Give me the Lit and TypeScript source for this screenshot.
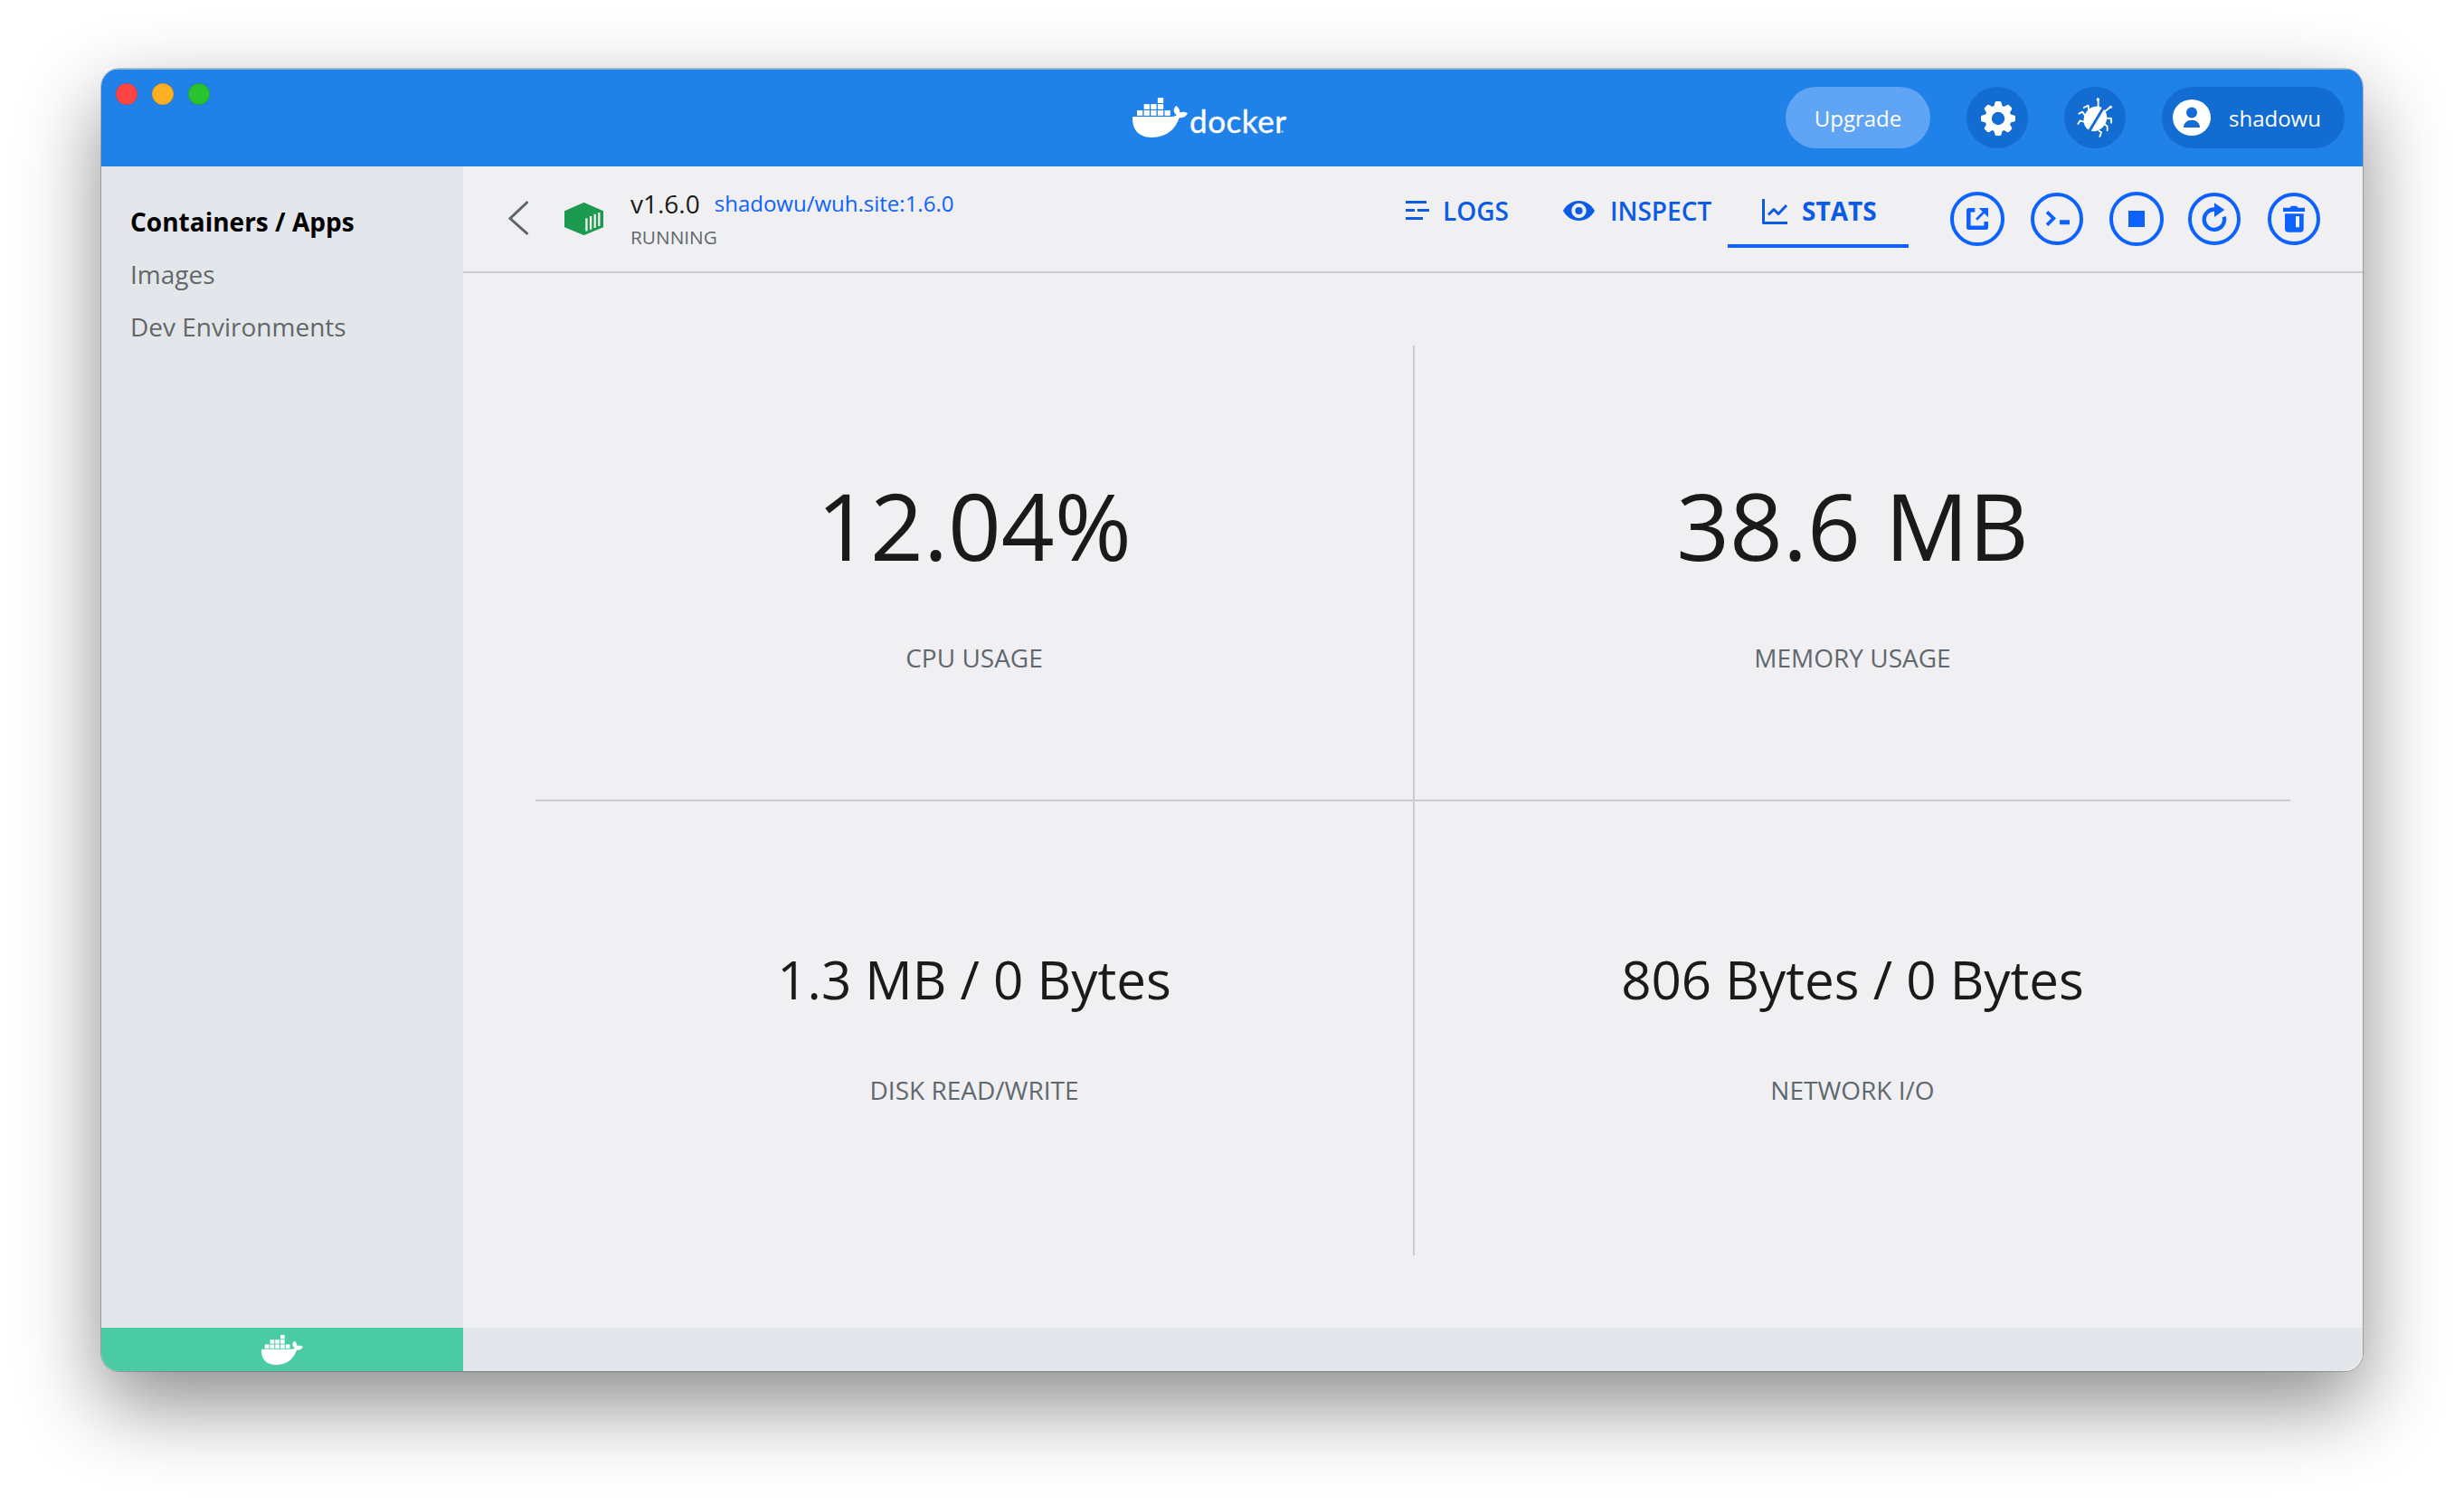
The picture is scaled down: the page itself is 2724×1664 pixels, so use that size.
import { LitElement, html, css, svg } from 'lit';
import { customElement, property, state } from 'lit/decorators.js';
import { classMap } from 'lit/directives/class-map.js';

@customElement('docker-whale')
export class DockerWhale extends LitElement {
  static styles = css`
    :host {
      display: block;
      line-height: 0;
    }

    svg {
      width: 100%;
      height: 100%;
      fill: white;
    }
  `;

  render() {
    const boxes = [
      [84, 0],
      [38, 21], [61, 21], [84, 21],
      [15, 42], [38, 42], [61, 42], [84, 42], [107, 42],
    ];

    return html`
      <svg viewBox="0 0 184 132">
        ${boxes.map(([x, y]) => svg`<rect x=${x} y=${y} width="19" height="17.5" />`)}
        <path d="M3 63H130C138 63 144 61 147 58C136 50 134 37 146 27C154 32 158 40 158 49C166 46 177 47 184 52C180 62 169 68 156 67C142 107 113 132 65 132C24 132 0 110 0 68Q0 63 3 63Z" />
      </svg>
    `;
  }
}

@customElement('title-bar')
export class TitleBar extends LitElement {
  static styles = css`
    :host {
      display: grid;
      grid-template-columns: 1fr auto 1fr;
      height: 108px;
      background: #2081e8;
      color: white;
      box-shadow: inset 0 2px 0 -1px rgba(255, 255, 255, 0.45);
    }

    .lights {
      display: flex;
      gap: 16px;
      padding: 16px;
    }

    .light {
      width: 24px;
      height: 24px;
      border-radius: 50%;
      box-sizing: border-box;
      border: 1px solid rgba(0, 0, 0, 0.12);
    }

    .close {
      background: #ff4645;
    }

    .minimize {
      background: #ffb024;
    }

    .zoom {
      background: #29c32f;
    }

    .logo {
      display: flex;
      align-items: flex-start;
      padding-top: 32px;
      margin-right: 48px;
    }

    .logo docker-whale {
      width: 61px;
      height: 44px;
    }

    .wordmark {
      width: 112px;
      height: 54px;
      overflow: visible;
      font-family: Lato, 'Open Sans', sans-serif;
      font-size: 35px;
      font-weight: 400;
      fill: white;
    }

    .actions {
      display: flex;
      justify-content: flex-end;
      align-items: center;
      gap: 40px;
      padding-right: 20px;
      font-size: 24px;
    }

    .pill {
      display: flex;
      align-items: center;
      box-sizing: border-box;
      height: 68px;
      border-radius: 34px;
      background: #126cd1;
    }

    .upgrade {
      width: 160px;
      justify-content: center;
      background: #5fa4f5;
    }

    .round {
      width: 68px;
      justify-content: center;
    }

    .user {
      width: 202px;
      gap: 20px;
      padding-left: 12px;
    }

    .avatar {
      width: 42px;
      height: 40px;
    }

    .gear {
      width: 38px;
      height: 38px;
      margin: 2px 0 0 2px;
    }

    .bug {
      width: 40px;
      height: 44px;
    }
  `;

  renderGear() {
    return html`
      <svg class="gear" viewBox="-19 -19 38 38" fill="white">
        <circle r="10.9" fill="none" stroke="white" stroke-width="7.4" />
        ${[0, 45, 90, 135, 180, 225, 270, 315].map(
          (a) => svg`<path transform="rotate(${a})" d="M-5 -12L-3.6 -17.5Q-3.3 -19 -2 -19H2Q3.3 -19 3.6 -17.5L5 -12Z" />`
        )}
      </svg>
    `;
  }

  renderBug() {
    return html`
      <svg class="bug" viewBox="0 0 120 132" fill="white">
        <ellipse cx="61" cy="70" rx="37" ry="43" transform="rotate(30 61 70)" />
        <g fill="none" stroke="white" stroke-width="5.5" stroke-linecap="round" stroke-linejoin="round">
          <path d="M71 32L71 8M90 48L112 31" />
          <path d="M39 40L38 26L23 33M27 59L19 47L7 53M26 81L11 76L4 87" />
          <path d="M96 68L114 69V83M92 88L101 95V109M74 110L81 115L76 129" />
        </g>
        <circle cx="70" cy="6" r="5" />
        <circle cx="112" cy="31" r="5" />
        <path d="M38 116L88 34" stroke="#126cd1" stroke-width="9" />
      </svg>
    `;
  }

  render() {
    return html`
      <div class="lights">
        <span class="light close"></span>
        <span class="light minimize"></span>
        <span class="light zoom"></span>
      </div>
      <div class="logo">
        <docker-whale></docker-whale>
        <svg class="wordmark">
          <text x="2" y="39" textLength="107" stroke="white" stroke-width="0.4">docker</text>
          <circle cx="104.5" cy="37.5" r="1.2" opacity="0.6" />
        </svg>
      </div>
      <div class="actions">
        <div class="pill upgrade">Upgrade</div>
        <div class="pill round">${this.renderGear()}</div>
        <div class="pill round">${this.renderBug()}</div>
        <div class="pill user">
          <svg class="avatar" viewBox="0 0 42 40" fill="#126cd1">
            <ellipse cx="21" cy="20" rx="21" ry="20" fill="white" />
            <circle cx="21" cy="14.5" r="6" />
            <path d="M12 31C12 26 16 22.7 21 22.7S30 26 30 31Z" />
          </svg>
          shadowu
        </div>
      </div>
    `;
  }
}

@customElement('side-bar')
export class SideBar extends LitElement {
  static styles = css`
    :host {
      display: flex;
      flex-direction: column;
      justify-content: space-between;
      background: #e3e6eb;
    }

    .nav {
      padding: 32px;
      font-size: 28px;
      line-height: 58px;
      color: #666;
    }

    .active {
      font-weight: 700;
      color: #000;
    }

    .status {
      display: flex;
      justify-content: center;
      align-items: center;
      height: 48px;
      background: #4acba4;
    }

    .status docker-whale {
      width: 46px;
      height: 33px;
    }
  `;

  @property({ type: String }) active = 'Containers / Apps';

  render() {
    const items = ['Containers / Apps', 'Images', 'Dev Environments'];

    return html`
      <div class="nav">
        ${items.map(
          (item) => html`<div class=${classMap({ active: item === this.active })}>${item}</div>`
        )}
      </div>
      <div class="status"><docker-whale></docker-whale></div>
    `;
  }
}

@customElement('container-header')
export class ContainerHeader extends LitElement {
  static styles = css`
    :host {
      display: flex;
      align-items: flex-start;
      box-sizing: border-box;
      height: 118px;
      padding: 0 47px 0 49px;
      border-bottom: 2px solid #cbcbce;
    }

    .back {
      width: 24px;
      height: 40px;
      margin-top: 37px;
    }

    .cube {
      width: 43px;
      height: 36px;
      margin: 40px 0 0 39px;
    }

    .info {
      margin: 22px 0 0 30px;
    }

    .name-row {
      display: flex;
      align-items: flex-start;
      gap: 16px;
      height: 38px;
      line-height: 38px;
    }

    .name {
      font-size: 28px;
      color: #1a1a1a;
    }

    .image {
      font-size: 24px;
      color: #0d61ff;
    }

    .state {
      font-size: 20.8px;
      line-height: 36px;
      color: #5f686d;
    }

    .tabs {
      display: flex;
      margin-left: auto;
      padding-top: 8px;
      font-size: 28px;
      font-weight: 600;
      color: #0b5be6;
    }

    .tab {
      display: flex;
      align-items: center;
      box-sizing: border-box;
      height: 82px;
      padding-top: 4px;
      border-bottom: 4px solid transparent;
    }

    .tab.selected {
      width: 200px;
      padding-left: 38px;
      font-weight: 700;
      border-bottom-color: #0d61ff;
    }

    .tab svg {
      margin-right: 16px;
    }

    .logs {
      width: 174px;
    }

    .logs svg {
      margin-right: 15px;
    }

    .inspect {
      width: 182px;
    }

    .inspect svg {
      margin-right: 17px;
    }

    .actions {
      display: flex;
      align-items: center;
      gap: 29px;
      margin: 28px 0 0 46px;
    }

    .action {
      display: flex;
      justify-content: center;
      align-items: center;
      box-sizing: border-box;
      width: 58px;
      height: 58px;
      border: 4px solid #0d61ff;
      border-radius: 50%;
    }

    .large {
      width: 60px;
      height: 60px;
    }

    .restart {
      margin-left: -2px;
    }

    .remove {
      margin-left: 1px;
    }

    .action svg {
      flex: none;
      width: 36px;
      height: 36px;
      fill: #0d61ff;
    }

    .action .line {
      fill: none;
      stroke: #0d61ff;
    }
  `;

  @state() private tab = 'stats';

  renderTab(id: string, label: string, icon: unknown) {
    return html`
      <div class="tab ${id} ${this.tab === id ? 'selected' : ''}" @click=${() => (this.tab = id)}>
        ${icon}${label}
      </div>
    `;
  }

  render() {
    return html`
      <svg class="back" viewBox="0 0 24 40" fill="none" stroke="#5c656a" stroke-width="3">
        <path d="M22.5 2L3 20.5L22.5 38" />
      </svg>
      <svg class="cube" viewBox="0 0 43 36">
        <path
          d="M21.5 1L42 10V26.5L21.5 35L1 26.5V10Z"
          fill="#1b9a50"
          stroke="#1b9a50"
          stroke-width="2"
          stroke-linejoin="round"
        />
        <path
          d="M24.4 17.2V31.6M29.1 15V29.8M33.7 12.8V28M38.3 11V26"
          stroke="#f0f0f3"
          stroke-width="2.3"
        />
      </svg>
      <div class="info">
        <div class="name-row">
          <span class="name">v1.6.0</span>
          <span class="image">shadowu/wuh.site:1.6.0</span>
        </div>
        <div class="state">RUNNING</div>
      </div>
      <div class="tabs">
        ${this.renderTab('logs', 'LOGS', html`
          <svg width="26" height="22" fill="#0b5be6">
            <path d="M0 0H23V3H0ZM0 9H10V12H0ZM13 9H26V12H13ZM0 18H19V21H0Z" />
          </svg>
        `)}
        ${this.renderTab('inspect', 'INSPECT', html`
          <svg width="35" height="22" viewBox="0 0 35 22" fill="#0b5be6">
            <path
              fill-rule="evenodd"
              d="M0 11C4 4 10 0 17.5 0S31 4 35 11C31 18 25 22 17.5 22S4 18 0 11ZM17.5 2.8A8.2 8.2 0 1 0 17.5 19.2A8.2 8.2 0 1 0 17.5 2.8Z"
            />
            <circle cx="17.5" cy="11" r="4.1" />
          </svg>
        `)}
        ${this.renderTab('stats', 'STATS', html`
          <svg width="28" height="30" fill="none" stroke="#0b5be6" stroke-width="3" stroke-linejoin="round">
            <path d="M1.5 2V28.5H28" />
            <path d="M7 19.5L13 13.5L18 18.5L27 9" />
          </svg>
        `)}
      </div>
      <div class="actions">
        <div class="action large">
          <svg viewBox="0 0 36 36">
            <path class="line" stroke-width="4.6" stroke-linejoin="round" d="M15.3 8.3H8.3V27.7H27.7V21" />
            <path class="line" stroke-width="2.7" d="M17 18.7L26 9.7" />
            <path d="M19.7 6H30V16.3Z" />
          </svg>
        </div>
        <div class="action">
          <svg viewBox="0 0 36 36">
            <path class="line" stroke-width="3.8" d="M7 10.3L14.3 17.5L7 24.7" />
            <path d="M21 19.3H32V24.3H21Z" />
          </svg>
        </div>
        <div class="action large">
          <svg viewBox="0 0 36 36"><path d="M9 9H27V27H9Z" /></svg>
        </div>
        <div class="action restart">
          <svg viewBox="0 0 36 36">
            <path class="line" stroke-width="4.3" d="M18 7.5A11.2 11.2 0 1 0 28.7 15.7" />
            <path d="M18 0.3L29.3 8L18 16Z" />
          </svg>
        </div>
        <div class="action remove">
          <svg viewBox="0 0 36 36">
            <path d="M6 5.7H13.4L15 3.7H21L22.6 5.7H30V10H6Z" />
            <path
              fill-rule="evenodd"
              d="M8 12.3H28.7V29Q28.7 32.7 25 32.7H11.7Q8 32.7 8 29ZM20 15V27.3H24V15Z"
            />
          </svg>
        </div>
      </div>
    `;
  }
}

@customElement('container-stats')
export class ContainerStats extends LitElement {
  static styles = css`
    :host {
      display: grid;
      grid-template-columns: 970px 968px;
      grid-template-rows: 502px 502px;
      gap: 2px;
      padding: 80px;
    }

    .cell {
      display: flex;
      flex-direction: column;
      align-items: center;
      position: relative;
      color: #1a1a1a;
    }

    .value {
      font-size: 103px;
      line-height: 142px;
      margin: 127px 0 57px;
    }

    .small .value {
      font-size: 58.3px;
      line-height: 82px;
      margin: 156px 0 62px;
    }

    .label {
      font-size: 28px;
      line-height: 38px;
      color: #5f686d;
    }

    .left::after {
      content: '';
      position: absolute;
      top: 0;
      bottom: 0;
      right: -2px;
      width: 2px;
      background: #cbcbce;
    }

    .top::before {
      content: '';
      position: absolute;
      left: 0;
      right: 0;
      bottom: -2px;
      height: 2px;
      background: #cbcbce;
    }

    .top.left::before {
      right: -2px;
    }
  `;

  render() {
    return html`
      <div class="cell top left">
        <div class="value">12.04%</div>
        <div class="label">CPU USAGE</div>
      </div>
      <div class="cell top">
        <div class="value">38.6 MB</div>
        <div class="label">MEMORY USAGE</div>
      </div>
      <div class="cell small left">
        <div class="value">1.3 MB / 0 Bytes</div>
        <div class="label">DISK READ/WRITE</div>
      </div>
      <div class="cell small">
        <div class="value">806 Bytes / 0 Bytes</div>
        <div class="label">NETWORK I/O</div>
      </div>
    `;
  }
}

@customElement('app-root')
export class AppRoot extends LitElement {
  static styles = css`
    :host {
      display: block;
      box-sizing: border-box;
      width: 2724px;
      height: 1664px;
      padding: 76px 112px;
      overflow: hidden;
      background: white;
      font-family: 'Open Sans', 'Noto Sans', sans-serif;
    }

    .window {
      display: flex;
      flex-direction: column;
      width: 2500px;
      height: 1440px;
      border-radius: 20px;
      box-shadow:
        0 0 0 1px rgba(0, 0, 0, 0.22),
        0 36px 90px rgba(0, 0, 0, 0.46);
    }

    .clip {
      display: flex;
      flex-direction: column;
      flex: 1;
      border-radius: 20px;
      overflow: hidden;
    }

    .body {
      display: flex;
      flex: 1;
    }

    side-bar {
      width: 400px;
    }

    .main {
      display: flex;
      flex-direction: column;
      flex: 1;
      background: #f0f0f3;
    }

    .footer {
      height: 48px;
      margin-top: auto;
      background: #e3e6eb;
    }
  `;

  render() {
    return html`
      <div class="window">
        <div class="clip">
          <title-bar></title-bar>
          <div class="body">
            <side-bar></side-bar>
            <div class="main">
              <container-header></container-header>
              <container-stats></container-stats>
              <div class="footer"></div>
            </div>
          </div>
        </div>
      </div>
    `;
  }
}
